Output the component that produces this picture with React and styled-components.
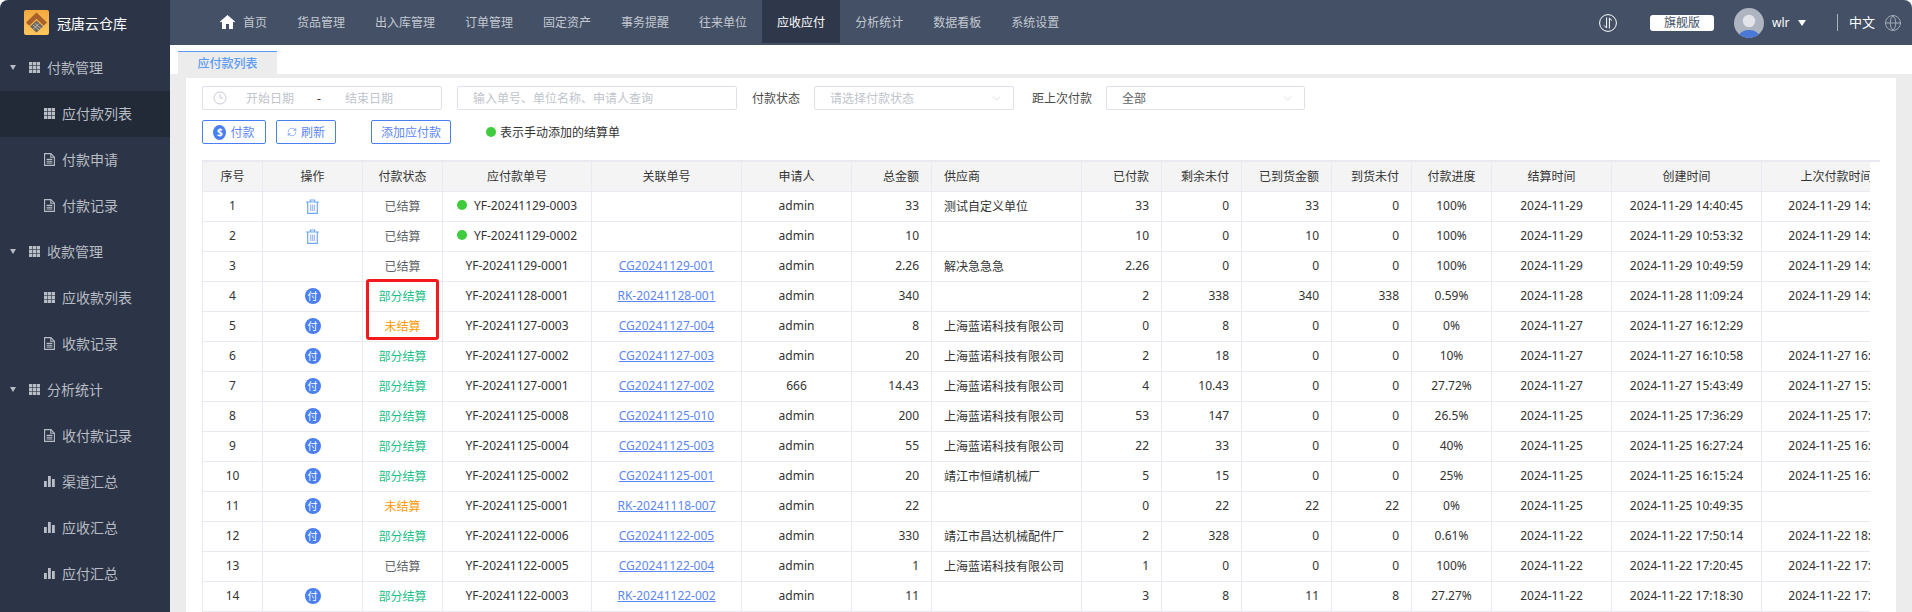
import React from "react";
import styled, { createGlobalStyle } from "styled-components";
import { ChevronDown, RefreshCw, Globe } from "lucide-react";

const GlobalStyle = createGlobalStyle`
  html, body {
    margin: 0;
    padding: 0;
    background: #fff;
    font-family: "Noto Sans", "Noto Sans CJK SC", sans-serif;
    font-size: 12px;
    overflow: hidden;
  }
  * {
    box-sizing: border-box;
  }
`;

const navItems = ["货品管理", "出入库管理", "订单管理", "固定资产", "事务提醒", "往来单位", "应收应付", "分析统计", "数据看板", "系统设置"];

const sideMenu = [
  { title: "付款管理", items: [["应付款列表", "grid", true], ["付款申请", "doc"], ["付款记录", "doc"]] },
  { title: "收款管理", items: [["应收款列表", "grid"], ["收款记录", "doc"]] },
  { title: "分析统计", items: [["收付款记录", "doc"], ["渠道汇总", "bar"], ["应收汇总", "bar"], ["应付汇总", "bar"]] },
];

const columns = [
  { label: "序号", width: 61, align: "center" },
  { label: "操作", width: 100, align: "center" },
  { label: "付款状态", width: 80, align: "center" },
  { label: "应付款单号", width: 149, align: "center" },
  { label: "关联单号", width: 150, align: "center" },
  { label: "申请人", width: 110, align: "center" },
  { label: "总金额", width: 80, align: "right" },
  { label: "供应商", width: 150, align: "left" },
  { label: "已付款", width: 80, align: "right" },
  { label: "剩余未付", width: 80, align: "right" },
  { label: "已到货金额", width: 90, align: "right" },
  { label: "到货未付", width: 80, align: "right" },
  { label: "付款进度", width: 80, align: "center" },
  { label: "结算时间", width: 120, align: "center" },
  { label: "创建时间", width: 150, align: "center" },
  { label: "上次付款时间", width: 167, align: "center", headPad: 17 },
];

const LANNUO = "上海蓝诺科技有限公司";

const rows = [
  ["del", "已结算", "YF-20241129-0003", "", "admin", "33", "测试自定义单位", "33", "0", "33", "0", "100%", "2024-11-29", "2024-11-29 14:40:45", "2024-11-29 14:41:02", true],
  ["del", "已结算", "YF-20241129-0002", "", "admin", "10", "", "10", "0", "10", "0", "100%", "2024-11-29", "2024-11-29 10:53:32", "2024-11-29 14:40:10", true],
  ["", "已结算", "YF-20241129-0001", "CG20241129-001", "admin", "2.26", "解决急急急", "2.26", "0", "0", "0", "100%", "2024-11-29", "2024-11-29 10:49:59", "2024-11-29 14:38:20"],
  ["pay", "部分结算", "YF-20241128-0001", "RK-20241128-001", "admin", "340", "", "2", "338", "340", "338", "0.59%", "2024-11-28", "2024-11-28 11:09:24", "2024-11-29 14:36:12"],
  ["pay", "未结算", "YF-20241127-0003", "CG20241127-004", "admin", "8", LANNUO, "0", "8", "0", "0", "0%", "2024-11-27", "2024-11-27 16:12:29", ""],
  ["pay", "部分结算", "YF-20241127-0002", "CG20241127-003", "admin", "20", LANNUO, "2", "18", "0", "0", "10%", "2024-11-27", "2024-11-27 16:10:58", "2024-11-27 16:11:30"],
  ["pay", "部分结算", "YF-20241127-0001", "CG20241127-002", "666", "14.43", LANNUO, "4", "10.43", "0", "0", "27.72%", "2024-11-27", "2024-11-27 15:43:49", "2024-11-27 15:44:20"],
  ["pay", "部分结算", "YF-20241125-0008", "CG20241125-010", "admin", "200", LANNUO, "53", "147", "0", "0", "26.5%", "2024-11-25", "2024-11-25 17:36:29", "2024-11-25 17:37:05"],
  ["pay", "部分结算", "YF-20241125-0004", "CG20241125-003", "admin", "55", LANNUO, "22", "33", "0", "0", "40%", "2024-11-25", "2024-11-25 16:27:24", "2024-11-25 16:28:01"],
  ["pay", "部分结算", "YF-20241125-0002", "CG20241125-001", "admin", "20", "靖江市恒靖机械厂", "5", "15", "0", "0", "25%", "2024-11-25", "2024-11-25 16:15:24", "2024-11-25 16:16:00"],
  ["pay", "未结算", "YF-20241125-0001", "RK-20241118-007", "admin", "22", "", "0", "22", "22", "22", "0%", "2024-11-25", "2024-11-25 10:49:35", ""],
  ["pay", "部分结算", "YF-20241122-0006", "CG20241122-005", "admin", "330", "靖江市昌达机械配件厂", "2", "328", "0", "0", "0.61%", "2024-11-22", "2024-11-22 17:50:14", "2024-11-22 18:02:11"],
  ["", "已结算", "YF-20241122-0005", "CG20241122-004", "admin", "1", LANNUO, "1", "0", "0", "0", "100%", "2024-11-22", "2024-11-22 17:20:45", "2024-11-22 17:21:15"],
  ["pay", "部分结算", "YF-20241122-0003", "RK-20241122-002", "admin", "11", "", "3", "8", "11", "8", "27.27%", "2024-11-22", "2024-11-22 17:18:30", "2024-11-22 17:19:00"],
];

const statusColors = { 已结算: "#606266", 部分结算: "#1cc08a", 未结算: "#ff9900" };

const GridIcon = () => (
  <svg width="11" height="11" viewBox="0 0 11 11" fill="#b9bec6">
    {[0, 4, 8].map((y) =>
      [0, 4, 8].map((x) => <rect key={`${x}-${y}`} x={x} y={y} width="3.4" height="3.4" />)
    )}
  </svg>
);

const DocIcon = () => (
  <svg width="11" height="13" viewBox="0 0 11 13" fill="none" stroke="#b9bec6" strokeWidth="1.1">
    <path d="M.6.6h6.2l3.6 3.6v8.2H.6z" />
    <path d="M6.8.6v3.6h3.6M2.6 6.4h5.8M2.6 8.2h5.8M2.6 10h5.8" />
  </svg>
);

const BarIcon = () => (
  <svg width="11" height="11" viewBox="0 0 11 11" fill="#b9bec6">
    <rect x="0" y="5" width="2.8" height="6" />
    <rect x="4" y="0" width="2.8" height="11" />
    <rect x="8" y="3" width="2.8" height="8" />
  </svg>
);

const sideIcons = { grid: GridIcon, doc: DocIcon, bar: BarIcon };

const Logo = () => (
  <svg width="25" height="25" viewBox="0 0 25 25">
    <defs>
      <linearGradient id="logoBg" x1="0" y1="0" x2="0" y2="1">
        <stop offset="0" stopColor="#f2a93f" />
        <stop offset="1" stopColor="#fdc65c" />
      </linearGradient>
    </defs>
    <rect width="25" height="25" rx="2" fill="url(#logoBg)" />
    <path d="M12.5 2.5 23 12.5l-3.4 3.2-7.1-6.9-7.1 6.9L2 12.5z" fill="#a9602a" />
    <path d="M12.5 10.5 19 16.5l-6.5 6-6.5-6z" fill="#6d6660" />
    <path d="M9 15l6 5M11 13.5l6 5M15 13.5l-6 6" stroke="#cfc9c2" strokeWidth=".8" />
  </svg>
);

const TrashIcon = () => (
  <svg width="13" height="15" viewBox="0 0 13 15" fill="none" stroke="#6ea8fa" strokeWidth="1.2">
    <path d="M0 3h13M4.4 3V1h4.2v2" />
    <path d="M1.7 3v11.4h9.6V3" />
    <path d="M4.6 5.4v6.6M6.5 5.4v6.6M8.4 5.4v6.6" stroke="#a9bdf5" strokeWidth="1.3" />
  </svg>
);

const Page = styled.div`
  display: grid;
  grid-template-columns: 170px 1fr;
  width: 1912px;
  height: 612px;
  overflow: hidden;
  background: #fff;
`;

const Sidebar = styled.aside`
  background: #2c3547;
  border-top-left-radius: 8px;
  display: flex;
  flex-direction: column;
`;

const Brand = styled.div`
  height: 45px;
  padding: 0 0 0 24px;
  display: flex;
  align-items: center;
  gap: 8px;
  color: #fff;
  font-size: 14px;
  svg {
    flex: none;
  }
`;

const SideRow = styled.div`
  height: 46px;
  display: flex;
  align-items: center;
  color: #b8bcc4;
  font-size: 14px;
  background: ${(p) => (p.$active ? "#222a38" : "transparent")};
  padding-left: ${(p) => (p.$group ? "10px" : "44px")};
  padding-bottom: 2px;
  gap: 7px;
`;

const Caret = styled.i`
  width: 0;
  height: 0;
  border-left: 3.5px solid transparent;
  border-right: 3.5px solid transparent;
  border-top: 5px solid #b8bcc4;
  margin-right: 6px;
`;

const SideIconBox = styled.span`
  width: 11px;
  display: flex;
  justify-content: center;
`;

const Main = styled.main`
  display: flex;
  flex-direction: column;
  min-width: 0;
`;

const TopBar = styled.header`
  height: 45px;
  background: #435066;
  border-top-right-radius: 8px;
  display: flex;
  align-items: flex-start;
  padding-left: 35px;
  color: #c4c9d1;
`;

const NavItem = styled.a`
  height: 43px;
  padding: 0 15px;
  display: flex;
  align-items: center;
  gap: 8px;
  font-size: 12px;
  color: ${(p) => (p.$active ? "#fff" : "#c4c9d1")};
  background: ${(p) => (p.$active ? "#2f384a" : "transparent")};
`;

const TopRight = styled.div`
  margin-left: auto;
  height: 45px;
  display: flex;
  align-items: center;
  color: #fff;
`;

const RoundIcon = styled.span`
  display: flex;
  margin-right: 33px;
`;

const PlanBadge = styled.span`
  width: 64px;
  height: 16px;
  border-radius: 3px;
  background: #fff;
  color: #435066;
  font-size: 12px;
  line-height: 16px;
  text-align: center;
  margin-right: 20px;
`;

const Avatar = styled.span`
  width: 30px;
  height: 30px;
  border-radius: 50%;
  display: block;
  overflow: hidden;
  margin-right: 8px;
`;

const UserName = styled.span`
  font-size: 12px;
  width: 26px;
`;

const UserCaret = styled.i`
  width: 0;
  height: 0;
  border-left: 4.5px solid transparent;
  border-right: 4.5px solid transparent;
  border-top: 6px solid #fff;
  margin-right: 31px;
`;

const Lang = styled.span`
  border-left: 1px solid #aab1bd;
  height: 17px;
  line-height: 17px;
  padding-left: 11px;
  font-size: 13px;
  margin-right: 9px;
`;

const TabBar = styled.div`
  height: 29px;
  padding: 6px 0 0 8px;
  background: #fff;
`;

const Tab = styled.div`
  width: 99px;
  height: 23px;
  background: #ececec;
  border-top: 1px solid #5c9cf5;
  color: #5c9cf5;
  font-size: 12px;
  text-align: center;
  line-height: 24px;
  font-weight: 500;
`;

const Content = styled.div`
  flex: 1;
  min-height: 0;
  background: #ececec;
  padding: 4px 16px 0 16px;
`;

const Panel = styled.section`
  background: #fff;
  height: 100%;
  padding: 8px 0 0 16px;
`;

const FilterRow = styled.div`
  display: flex;
  align-items: center;
  height: 24px;
`;

const Field = styled.div`
  width: ${(p) => p.$w}px;
  height: 24px;
  margin-right: ${(p) => p.$mr || 0}px;
  border: 1px solid #dfe2ea;
  border-radius: 2px;
  display: flex;
  align-items: center;
  font-size: 12px;
  padding-left: ${(p) => p.$pl || 15}px;
  color: ${(p) => (p.$filled ? "#606266" : "#c0c4cc")};
  position: relative;
  svg.chev {
    position: absolute;
    right: 10px;
    top: 5px;
  }
`;

const DateText = styled.span`
  width: ${(p) => p.$w}px;
  color: ${(p) => p.$c || "#c0c4cc"};
`;

const FilterLabel = styled.span`
  font-size: 12px;
  color: #4a4a4a;
  margin-right: ${(p) => p.$mr}px;
`;

const ActionRow = styled.div`
  display: flex;
  align-items: center;
  height: 24px;
  margin-top: 10px;
`;

const OutlineButton = styled.button`
  width: ${(p) => p.$w}px;
  height: 24px;
  margin-right: ${(p) => p.$mr}px;
  padding: 0;
  background: #fff;
  border: 1px solid #4a7ff0;
  border-radius: 2px;
  color: #5d86f5;
  font-family: inherit;
  font-size: 12px;
  display: flex;
  align-items: center;
  justify-content: center;
  gap: 4px;
`;

const Dollar = styled.span`
  width: 13px;
  height: 15px;
  border-radius: 50%;
  background: #4a7ff0;
  color: #fff;
  font-size: 10px;
  font-weight: 700;
  line-height: 15px;
  text-align: center;
`;

const Hint = styled.span`
  display: flex;
  align-items: center;
  gap: 4px;
  font-size: 12px;
  color: #333;
`;

const GreenDot = styled.i`
  display: inline-block;
  width: 10px;
  height: 10px;
  border-radius: 50%;
  background: #3ecb3c;
  flex: none;
`;

const TableFrame = styled.div`
  position: relative;
  width: 1678px;
  margin-top: 16px;
  padding-right: 10px;
  border-top: 2px solid #e8eaf0;
`;

const TableClip = styled.div`
  width: 1668px;
  overflow: hidden;
`;

const Table = styled.table`
  width: 1727px;
  table-layout: fixed;
  border-collapse: separate;
  border-spacing: 0;
  color: #333;
  font-size: 12px;
  th, td {
    height: 30px;
    padding: 0 12px 2px;
    border-right: 1px solid #e8eaf2;
    border-bottom: 1px solid #e8eaf2;
    white-space: nowrap;
    overflow: hidden;
    font-weight: 400;
  }
  th {
    background: #f4f4f4;
    color: #333;
  }
  th:first-child, td:first-child {
    border-left: 1px solid #e8eaf2;
  }
`;

const HeadCell = styled.th`
  text-align: ${(p) => p.$align};
  padding-right: ${(p) => (p.$pad ? p.$pad + 12 : 12)}px !important;
`;

const BodyCell = styled.td`
  text-align: ${(p) => p.$align};
`;

const PayBadge = styled.span`
  display: inline-block;
  width: 16px;
  height: 16px;
  border-radius: 50%;
  background: #4a7ff0;
  color: #fff;
  font-size: 10px;
  line-height: 16px;
  text-align: center;
  vertical-align: middle;
`;

const TrashWrap = styled.span`
  display: inline-flex;
  vertical-align: middle;
`;

const Status = styled.span`
  color: ${(p) => statusColors[p.$s]};
`;

const OrderNo = styled.span`
  display: inline-flex;
  align-items: center;
  gap: 7px;
`;

const LinkText = styled.a`
  color: #5d86f5;
  text-decoration: underline;
`;

const Highlight = styled.div`
  position: absolute;
  left: 164px;
  top: 117px;
  width: 73px;
  height: 61px;
  border: 3px solid #f5181c;
  border-radius: 3px;
  pointer-events: none;
`;

export default function App() {
  return (
    <>
      <GlobalStyle />
      <Page>
        <Sidebar>
          <Brand>
            <Logo />
            <span>冠唐云仓库</span>
          </Brand>
          {sideMenu.map((group) => (
            <div key={group.title}>
              <SideRow $group>
                <Caret />
                <SideIconBox>
                  <GridIcon />
                </SideIconBox>
                {group.title}
              </SideRow>
              {group.items.map(([name, icon, active]) => {
                const Icon = sideIcons[icon];
                return (
                  <SideRow key={name} $active={active}>
                    <SideIconBox>
                      <Icon />
                    </SideIconBox>
                    {name}
                  </SideRow>
                );
              })}
            </div>
          ))}
        </Sidebar>
        <Main>
          <TopBar>
            <NavItem>
              <svg width="15" height="14" viewBox="0 0 15 14" fill="#fff">
                <path d="M7.5 0 15 6.6l-.8.9-1.2-1V14H9V9H6v5H2V6.5L.8 7.5 0 6.6z" />
              </svg>
              首页
            </NavItem>
            {navItems.map((n) => (
              <NavItem key={n} $active={n === "应收应付"}>
                {n}
              </NavItem>
            ))}
            <TopRight>
              <RoundIcon>
                <svg width="18" height="18" viewBox="0 0 18 18" fill="none" stroke="#fff" strokeWidth="1">
                  <circle cx="9" cy="9" r="8.4" />
                  <path d="M7.6 3.5v10.5L5 11.4M10.4 14.5V4L13 6.6" />
                </svg>
              </RoundIcon>
              <PlanBadge>旗舰版</PlanBadge>
              <Avatar>
                <svg width="30" height="30" viewBox="0 0 30 30">
                  <rect width="30" height="30" fill="#aeb4c0" />
                  <circle cx="15" cy="13" r="6.2" fill="#e2e4e9" />
                  <ellipse cx="15" cy="30" rx="11" ry="8" fill="#4a78d8" />
                </svg>
              </Avatar>
              <UserName>wlr</UserName>
              <UserCaret />
              <Lang>中文</Lang>
              <Globe size={18} color="#aab1bd" strokeWidth={1.2} style={{ marginRight: 10 }} />
            </TopRight>
          </TopBar>
          <TabBar>
            <Tab>应付款列表</Tab>
          </TabBar>
          <Content>
            <Panel>
              <FilterRow>
                <Field $w={240} $mr={15} $pl={10}>
                  <svg width="14" height="14" viewBox="0 0 14 14" fill="none" stroke="#c9ccd6" strokeWidth="1" style={{ marginRight: 19 }}>
                    <circle cx="7" cy="7" r="6" />
                    <path d="M7 3v4h3" />
                  </svg>
                  <DateText $w={71}>开始日期</DateText>
                  <DateText $w={28} $c="#333">-</DateText>
                  <DateText $w={60}>结束日期</DateText>
                </Field>
                <Field $w={280} $mr={15}>输入单号、单位名称、申请人查询</Field>
                <FilterLabel $mr={14}>付款状态</FilterLabel>
                <Field $w={200} $mr={18}>
                  请选择付款状态
                  <ChevronDown className="chev" size={13} color="#c9ccd6" strokeWidth={1.2} />
                </Field>
                <FilterLabel $mr={14}>距上次付款</FilterLabel>
                <Field $w={199} $filled>
                  全部
                  <ChevronDown className="chev" size={13} color="#c9ccd6" strokeWidth={1.2} />
                </Field>
              </FilterRow>
              <ActionRow>
                <OutlineButton $w={64} $mr={10}>
                  <Dollar>$</Dollar>付款
                </OutlineButton>
                <OutlineButton $w={60} $mr={35}>
                  <RefreshCw size={10} color="#5d86f5" strokeWidth={1.5} />
                  刷新
                </OutlineButton>
                <OutlineButton $w={80} $mr={35}>添加应付款</OutlineButton>
                <Hint>
                  <GreenDot />
                  表示手动添加的结算单
                </Hint>
              </ActionRow>
              <TableFrame>
                <TableClip>
                  <Table>
                    <colgroup>
                      {columns.map((c) => (
                        <col key={c.label} style={{ width: c.width }} />
                      ))}
                    </colgroup>
                    <thead>
                      <tr>
                        {columns.map((c) => (
                          <HeadCell key={c.label} $align={c.align} $pad={c.headPad}>
                            {c.label}
                          </HeadCell>
                        ))}
                      </tr>
                    </thead>
                    <tbody>
                      {rows.map((r, i) => (
                        <tr key={r[2]}>
                          <BodyCell $align="center">{i + 1}</BodyCell>
                          <BodyCell $align="center">
                            {r[0] === "pay" && <PayBadge>付</PayBadge>}
                            {r[0] === "del" && (
                              <TrashWrap>
                                <TrashIcon />
                              </TrashWrap>
                            )}
                          </BodyCell>
                          <BodyCell $align="center">
                            <Status $s={r[1]}>{r[1]}</Status>
                          </BodyCell>
                          <BodyCell $align="center">
                            <OrderNo>
                              {r[15] && <GreenDot />}
                              {r[2]}
                            </OrderNo>
                          </BodyCell>
                          <BodyCell $align="center">
                            <LinkText>{r[3]}</LinkText>
                          </BodyCell>
                          {r.slice(4, 15).map((v, j) => (
                            <BodyCell key={j} $align={columns[j + 5].align}>
                              {v}
                            </BodyCell>
                          ))}
                        </tr>
                      ))}
                    </tbody>
                  </Table>
                </TableClip>
                <Highlight />
              </TableFrame>
            </Panel>
          </Content>
        </Main>
      </Page>
    </>
  );
}
